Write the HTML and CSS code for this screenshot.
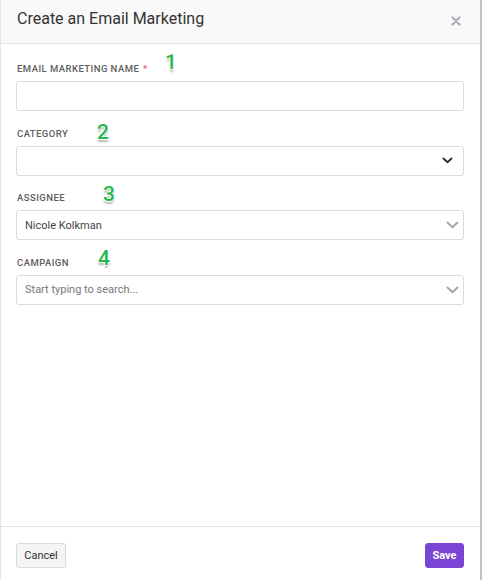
FILE: index.html
```html
<!DOCTYPE html>
<html lang="en">
<head>
<meta charset="utf-8">
<title>Create an Email Marketing</title>
<link rel="stylesheet" href="styles.css">
</head>
<body>
<div class="modal">
  <header class="modal-header">
    <h1 class="modal-title">Create an Email Marketing</h1>
    <button class="close" aria-label="Close">
      <svg width="10" height="10" viewBox="0 0 10 10"><path d="M1.5 1.5 L8.5 8.5 M8.5 1.5 L1.5 8.5" stroke="#a7adb4" stroke-width="2.2" stroke-linecap="round"/></svg>
    </button>
  </header>
  <main class="modal-body">
    <div class="field">
      <label class="label">Email Marketing Name <span class="req">*</span><span class="note note-1">1</span></label>
      <div class="input"></div>
    </div>
    <div class="field">
      <label class="label">Category<span class="note note-2">2</span></label>
      <div class="input select">
        <span class="value"></span>
        <svg class="chev chev-dark" width="11" height="7" viewBox="0 0 11 7"><path d="M1.5 1.5 L5.5 5.2 L9.5 1.5" fill="none" stroke="#333" stroke-width="2" stroke-linecap="round" stroke-linejoin="round"/></svg>
      </div>
    </div>
    <div class="field">
      <label class="label">Assignee<span class="note note-3">3</span></label>
      <div class="input select">
        <span class="value">Nicole Kolkman</span>
        <svg class="chev chev-light" width="13" height="8" viewBox="0 0 13 8"><path d="M1.5 1.5 L6.5 6.3 L11.5 1.5" fill="none" stroke="#a6a6a6" stroke-width="2" stroke-linecap="round" stroke-linejoin="round"/></svg>
      </div>
    </div>
    <div class="field">
      <label class="label">Campaign<span class="note note-4">4</span></label>
      <div class="input select">
        <span class="value placeholder">Start typing to search...</span>
        <svg class="chev chev-light" width="13" height="8" viewBox="0 0 13 8"><path d="M1.5 1.5 L6.5 6.3 L11.5 1.5" fill="none" stroke="#a6a6a6" stroke-width="2" stroke-linecap="round" stroke-linejoin="round"/></svg>
      </div>
    </div>
  </main>
  <footer class="modal-footer">
    <button class="btn btn-cancel">Cancel</button>
    <button class="btn btn-save">Save</button>
  </footer>
</div>
</body>
</html>
```

FILE: styles.css
```css
* { box-sizing: border-box; }
html, body { margin: 0; padding: 0; }
body {
  width: 482px;
  height: 580px;
  background: #fff;
  font-family: Roboto, "Liberation Sans", Arial, sans-serif;
  overflow: hidden;
}
.modal {
  width: 482px;
  height: 580px;
  display: flex;
  flex-direction: column;
  border-left: 1px solid #e4e4e4;
  border-right: 2px solid #c3c3c3;
  background: #fff;
}
.modal-header {
  height: 44px;
  flex: none;
  background: #f9f9f9;
  border-bottom: 1px solid #e3e3e3;
  display: flex;
  align-items: flex-start;
  justify-content: space-between;
  padding: 9px 19px 0 16px;
}
.modal-title {
  margin: 0;
  font-size: 16px;
  line-height: 20px;
  font-weight: 400;
  color: #333;
}
.close {
  border: 0;
  background: none;
  padding: 0;
  margin-top: 7px;
  width: 10px;
  height: 10px;
  display: block;
}
.close svg { display: block; }
.modal-body {
  flex: 1;
  padding: 19px 16px 0 15px;
  display: flex;
  flex-direction: column;
  gap: 16.5px;
}
.field { display: flex; flex-direction: column; }
.label {
  position: relative;
  display: block;
  font-size: 9.5px;
  line-height: 12px;
  font-weight: 500;
  text-transform: uppercase;
  letter-spacing: 0.45px;
  color: #5e5e5e;
  margin: 0 0 6px 1px;
}
.req { color: #e45b5b; margin-left: 1px; }
.note {
  position: absolute;
  font-size: 21px;
  line-height: 21px;
  font-weight: 500;
  color: #25b84a;
  text-shadow: -1px 0 #fff, 1px 0 #fff, 0 -1px #fff, 0 1px #fff, 0 3px 2px rgba(0,0,0,0.3);
  text-transform: none;
  letter-spacing: 0;
}
.note-1 { left: 148px; top: -11px; }
.note-2 { left: 80px; top: -6px; }
.note-3 { left: 86px; top: -8px; }
.note-4 { left: 81px; top: -9px; }
.input {
  height: 30px;
  border: 1px solid #dcdcdc;
  border-radius: 3px;
  background: #fff;
}
.select {
  display: flex;
  align-items: center;
  justify-content: space-between;
  padding: 0 4px 0 8px;
}
.value {
  font-size: 11px;
  color: #444;
}
.placeholder { color: #777; }
.chev { display: block; flex: none; }
.chev-dark { margin-right: 6px; }
.chev-light { margin-right: 0; }
.modal-footer {
  height: 54px;
  flex: none;
  border-top: 1px solid #e3e3e3;
  display: flex;
  justify-content: space-between;
  align-items: flex-start;
  padding: 16px 16px 0 15px;
}
.btn {
  font-family: Roboto, "Liberation Sans", Arial, sans-serif;
  font-size: 11px;
  height: 25px;
  border-radius: 3px;
  padding: 0;
  line-height: 23px;
}
.btn-cancel {
  width: 50px;
  background: #f4f4f4;
  border: 1px solid #dadada;
  color: #333;
}
.btn-save {
  width: 39px;
  background: #7a44d5;
  border: 1px solid #7a44d5;
  color: #fff;
  font-weight: 700;
}
```
